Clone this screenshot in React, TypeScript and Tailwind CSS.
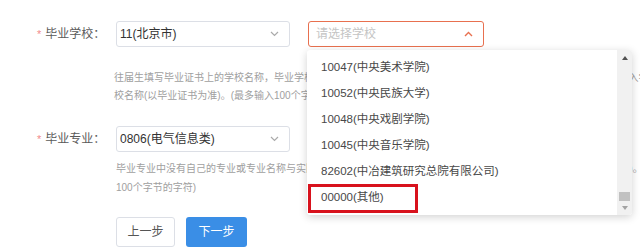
import React from "react";

function ChevronDown({ className }: { className?: string }) {
  return (
    <svg width="9" height="6" viewBox="0 0 9 6" className={className} fill="none">
      <path d="M1 1l3.5 3.5L8 1" stroke="currentColor" strokeWidth="1.2" />
    </svg>
  );
}

function ChevronUp({ className }: { className?: string }) {
  return (
    <svg width="9" height="6" viewBox="0 0 9 6" className={className} fill="none">
      <path d="M1 5l3.5-3.5L8 5" stroke="currentColor" strokeWidth="1.4" />
    </svg>
  );
}

const items = [
  "10047(中央美术学院)",
  "10052(中央民族大学)",
  "10048(中央戏剧学院)",
  "10045(中央音乐学院)",
  "82602(中冶建筑研究总院有限公司)",
  "00000(其他)",
];

export default function App() {
  return (
    <div className="relative w-[640px] h-[248px] overflow-hidden bg-white font-['Liberation_Sans','Noto_Sans_CJK_SC',sans-serif]">
      <div className="flex flex-col pt-[21px]">
        {/* Row 1 */}
        <div className="flex items-center h-[26px]">
          <div className="w-[116px] pl-[37px] flex items-center text-[12px] text-[#5a5a5a]">
            <span className="text-[#f28b8b] text-[11px] mr-[4px]">*</span>
            <span>毕业学校：</span>
          </div>
          <div className="w-[174px] h-[26px] border border-[#dcdfe6] rounded-[3px] flex items-center justify-between pl-[3px] pr-[10px] text-[12px] text-[#333]">
            <span>11(北京市)</span>
            <ChevronDown className="text-[#aaa]" />
          </div>
          <div className="ml-[18px] w-[176px] h-[26px] border border-[#e8704f] rounded-[3px] flex items-center justify-between pl-[7px] pr-[10px] text-[12px] text-[#c4c4c4]">
            <span>请选择学校</span>
            <ChevronUp className="text-[#e8704f]" />
          </div>
        </div>
        <div className="mt-[22px] pl-[114px] text-[10px] leading-[18px] text-[#a0a0a0] whitespace-nowrap">
          <div>往届生填写毕业证书上的学校名称，毕业学校未在列表中的，请选择00000(其他)后在右侧的输入框中自行准确手动输入学</div>
          <div>校名称(以毕业证书为准)。(最多输入100个字节的字符)</div>
        </div>

        {/* Row 2 */}
        <div className="mt-[21px] flex items-center h-[26px]">
          <div className="w-[116px] pl-[37px] flex items-center text-[12px] text-[#5a5a5a]">
            <span className="text-[#f28b8b] text-[11px] mr-[4px]">*</span>
            <span>毕业专业：</span>
          </div>
          <div className="w-[174px] h-[26px] border border-[#dcdfe6] rounded-[3px] flex items-center justify-between pl-[3px] pr-[10px] text-[12px] text-[#333]">
            <span>0806(电气信息类)</span>
            <ChevronDown className="text-[#aaa]" />
          </div>
        </div>
        <div className="mt-[7px] pl-[116px] text-[10px] leading-[19px] text-[#a0a0a0] whitespace-nowrap">
          <div>毕业专业中没有自己的专业或专业名称与实际不符的，请选择相近专业或手动输入正确完整专业名称(以毕业证书为准)。(最多输入</div>
          <div>100个字节的字符)</div>
        </div>

        {/* Buttons */}
        <div className="mt-[20px] pl-[116px] flex items-center gap-[11px]">
          <button className="w-[59px] h-[30px] border border-[#dcdfe6] rounded-[3px] bg-white text-[12px] text-[#555]">
            上一步
          </button>
          <button className="w-[61px] h-[30px] rounded-[3px] bg-[#3a8ee6] text-[12px] text-white">
            下一步
          </button>
        </div>
      </div>

      {/* Dropdown */}
      <div className="absolute left-[307px] top-[50px] w-[325px] h-[165px] bg-white rounded-[3px] shadow-[0_2px_8px_rgba(0,0,0,0.18)] overflow-hidden">
        <div className="pt-[5px]">
          {items.map((t) => (
            <div key={t} className="h-[26px] flex items-center pl-[14px] text-[11.5px] text-[#484848]">
              {t}
            </div>
          ))}
        </div>
        <div className="absolute right-0 top-0 bottom-0 w-[15px] bg-[#f1f1f1] flex flex-col items-center">
          <div className="mt-[6px] w-0 h-0 border-l-[3px] border-r-[3px] border-b-[4px] border-l-transparent border-r-transparent border-b-[#505050]" />
          <div className="flex-1" />
          <div className="w-[11px] h-[9px] bg-[#c1c1c1]" />
          <div className="mt-[5px] mb-[5px] w-0 h-0 border-l-[3px] border-r-[3px] border-t-[4px] border-l-transparent border-r-transparent border-t-[#a3a3a3]" />
        </div>
        <div className="absolute left-[1px] top-[134px] w-[110px] h-[29px] border-[3px] border-[#d8121d]" />
      </div>
    </div>
  );
}
